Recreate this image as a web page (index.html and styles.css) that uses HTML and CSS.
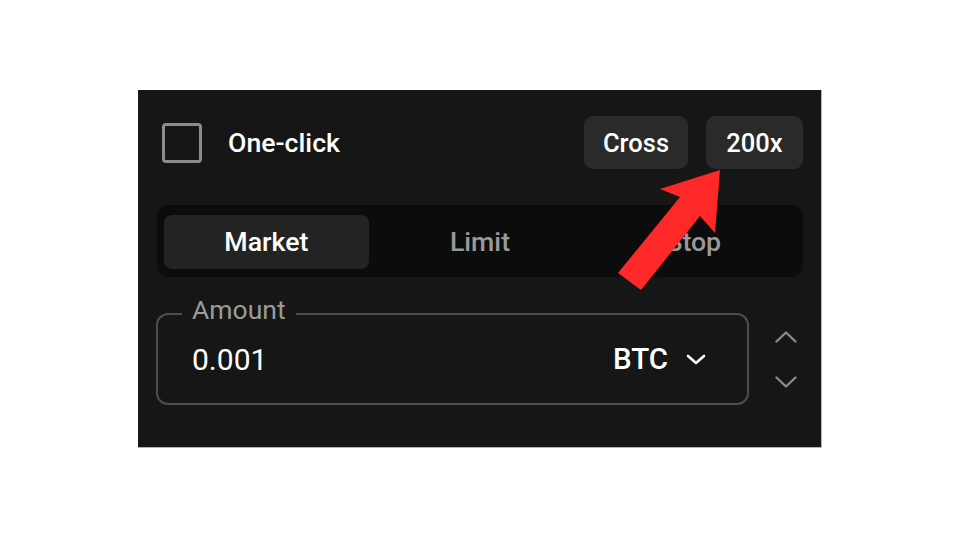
FILE: index.html
```html
<!DOCTYPE html>
<html lang="en">
<head>
<meta charset="utf-8">
<title>Order panel</title>
<link rel="stylesheet" href="styles.css">
</head>
<body>
<div class="panel">
  <div class="top-row">
    <label class="oneclick">
      <span class="checkbox"></span>
      <span class="oneclick-text">One-click</span>
    </label>
    <div class="btns">
      <button class="pill pill-cross">Cross</button>
      <button class="pill pill-lev">200x</button>
    </div>
  </div>

  <div class="tabs">
    <div class="tab tab-active">Market</div>
    <div class="tab">Limit</div>
    <div class="tab">Stop</div>
  </div>

  <div class="amount-row">
    <fieldset class="amount">
      <legend class="amount-label">Amount</legend>
      <div class="amount-inner">
        <span class="value">0.001</span>
        <span class="unit">BTC
          <svg class="unit-chev" width="20" height="11" viewBox="0 0 20 11"><path d="M2 2 L10 9 L18 2" fill="none" stroke="#ffffff" stroke-width="2.6" stroke-linecap="round" stroke-linejoin="round"/></svg>
        </span>
      </div>
    </fieldset>
    <div class="spinner">
      <svg width="22" height="12" viewBox="0 0 22 12"><path d="M1.5 10.5 L11 1.5 L20.5 10.5" fill="none" stroke="#8a8a8a" stroke-width="2.4" stroke-linecap="round" stroke-linejoin="round"/></svg>
      <svg width="22" height="12" viewBox="0 0 22 12"><path d="M1.5 1.5 L11 10.5 L20.5 1.5" fill="none" stroke="#8a8a8a" stroke-width="2.4" stroke-linecap="round" stroke-linejoin="round"/></svg>
    </div>
  </div>

  <svg class="arrow" width="684" height="358" viewBox="138 90 684 358">
    <polygon points="720,170 715,233 700,216 641,290 618,273 680,197 660,189" fill="#ff2828"/>
  </svg>
</div>
</body>
</html>
```

FILE: styles.css
```css
* { box-sizing: border-box; }

html, body {
  margin: 0;
  padding: 0;
  background: #ffffff;
}

body {
  font-family: Roboto, "Liberation Sans", sans-serif;
  color: #ffffff;
}

.panel {
  position: relative;
  margin: 90px 0 0 138px;
  width: 684px;
  height: 358px;
  background: #161616;
  border-right: 1px solid #b4b4b4;
  border-bottom: 1px solid #b4b4b4;
  padding: 26px 18px 0 19px;
}

.top-row {
  display: flex;
  align-items: center;
  justify-content: space-between;
  height: 53px;
}

.oneclick {
  display: flex;
  align-items: center;
  gap: 26px;
  margin-left: 5px;
}

.checkbox {
  width: 40px;
  height: 40px;
  border: 3px solid #8c8c8c;
  border-radius: 4px;
}

.oneclick-text {
  font-size: 26.7px;
  font-weight: 500;
  color: #ffffff;
}

.btns {
  display: flex;
  gap: 18px;
  margin-right: 0;
}

.pill {
  height: 53px;
  border: none;
  border-radius: 9px;
  background: #2a2a2a;
  color: #ffffff;
  font-family: Roboto, "Liberation Sans", sans-serif;
  font-size: 25.5px;
  font-weight: 500;
  padding: 0;
}

.pill-cross { width: 104px; }
.pill-lev { width: 97px; }

.tabs {
  margin-top: 36px;
  height: 72px;
  padding: 10px 7px 8px;
  background: #0c0c0c;
  border-radius: 12px;
  display: grid;
  grid-template-columns: repeat(3, 1fr);
  gap: 9px;
}

.tab {
  display: flex;
  align-items: center;
  justify-content: center;
  border-radius: 8px;
  font-size: 26.7px;
  font-weight: 500;
  color: #9a9a9a;
}

.tab-active {
  background: #232323;
  color: #ffffff;
}

.amount-row {
  display: flex;
  align-items: center;
  margin-top: 18px;
  margin-left: -1px;
}

.amount {
  margin: 0;
  width: 593px;
  border: 2px solid #4d4d4d;
  border-radius: 12px;
  padding: 9px 41px 27px 34px;
}

.amount-label {
  margin-left: -10px;
  padding: 0 10px 8px;
  font-size: 26.5px;
  line-height: 30px;
  color: #9b9b9b;
}

.amount-inner {
  display: flex;
  align-items: center;
  justify-content: space-between;
  height: 34px;
}

.value {
  font-size: 30px;
  color: #ffffff;
}

.unit {
  display: flex;
  align-items: center;
  font-size: 29.5px;
  font-weight: 500;
  color: #ffffff;
}

.unit-chev {
  margin-left: 18px;
}

.spinner {
  display: flex;
  flex-direction: column;
  align-items: center;
  gap: 33px;
  margin-left: 26px;
  margin-top: 18px;
}

.arrow {
  position: absolute;
  left: 0;
  top: 0;
  pointer-events: none;
}
```
